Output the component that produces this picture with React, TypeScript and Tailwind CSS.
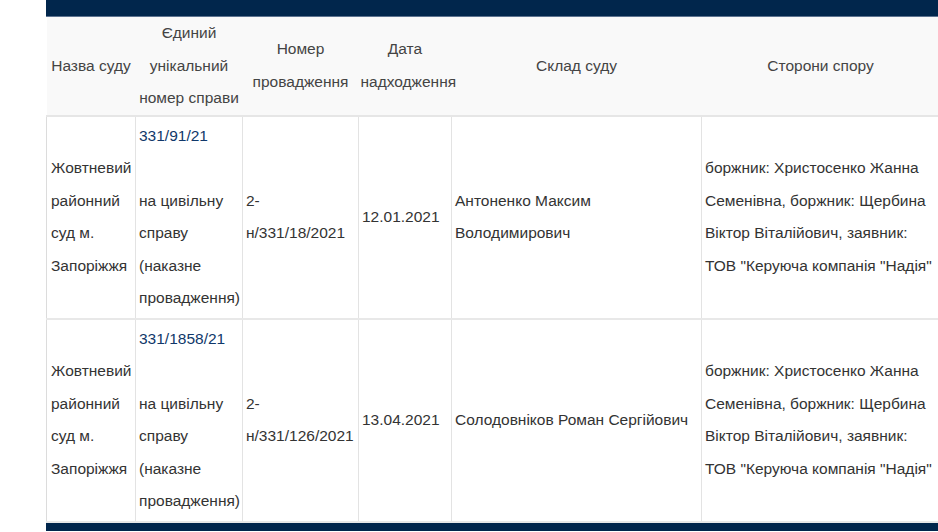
import { Fragment } from "react";

type CaseRow = {
  court: string;
  caseNo: string;
  caseNote: string;
  proceeding: string;
  date: string;
  judges: string;
  parties: string;
};

const rows: CaseRow[] = [
  {
    court: "Жовтневий районний суд м. Запоріжжя",
    caseNo: "331/91/21",
    caseNote: "на цивільну справу (наказне провадження)",
    proceeding: "2-н/331/18/2021",
    date: "12.01.2021",
    judges: "Антоненко Максим Володимирович",
    parties:
      'боржник: Христосенко Жанна Семенівна, боржник: Щербина Віктор Віталійович, заявник: ТОВ "Керуюча компанія "Надія"'
  },
  {
    court: "Жовтневий районний суд м. Запоріжжя",
    caseNo: "331/1858/21",
    caseNote: "на цивільну справу (наказне провадження)",
    proceeding: "2-н/331/126/2021",
    date: "13.04.2021",
    judges: "Солодовніков Роман Сергійович",
    parties:
      'боржник: Христосенко Жанна Семенівна, боржник: Щербина Віктор Віталійович, заявник: ТОВ "Керуюча компанія "Надія"'
  }
];

const headers = [
  "Назва суду",
  "Єдиний унікальний номер справи",
  "Номер провадження",
  "Дата надходження",
  "Склад суду",
  "Сторони спору"
];

const cell =
  "border-x border-[#e3e3e3] pl-[3px] pr-[1px] py-[3px] align-middle text-left first:border-l-[#dcdcdc] first:pl-[4px]";

export default function App() {
  return (
    <div className="flex min-h-[532px] overflow-hidden bg-white font-['Liberation_Sans',Arial,sans-serif] text-[15.5px] leading-[32.5px] text-[#333]">
      <div className="w-[46px] shrink-0" />
      <div className="flex w-[892px] shrink-0 flex-col">
        <div className="h-[17px] border-b border-[#5d7390] bg-[#01264c]" />
        <table className="w-[893px] table-fixed border-collapse">
          <colgroup>
            <col className="w-[89px]" />
            <col className="w-[107px]" />
            <col className="w-[116px]" />
            <col className="w-[93px]" />
            <col className="w-[250px]" />
            <col className="w-[238px]" />
          </colgroup>
          <thead>
            <tr className="h-[98px] border-b-2 border-[#e6e6e6] bg-[#f9f9f9]">
              {headers.map((h) => (
                <th
                  key={h}
                  className="px-[2px] py-0 text-center align-middle font-normal text-[#444]"
                >
                  {h}
                </th>
              ))}
            </tr>
          </thead>
          <tbody>
            {rows.map((r) => (
              <tr key={r.caseNo} className="border-b-2 border-[#e8e8e8]">
                <td className={cell}>{r.court}</td>
                <td className={cell}>
                  <Fragment>
                    <a className="text-[#10386a]">{r.caseNo}</a>
                    <br />
                    <br />
                    {r.caseNote}
                  </Fragment>
                </td>
                <td className={cell}>{r.proceeding}</td>
                <td className={cell}>{r.date}</td>
                <td className={cell}>{r.judges}</td>
                <td className={cell}>{r.parties}</td>
              </tr>
            ))}
          </tbody>
        </table>
        <div className="h-[8px] bg-[#01264c]" />
      </div>
    </div>
  );
}
